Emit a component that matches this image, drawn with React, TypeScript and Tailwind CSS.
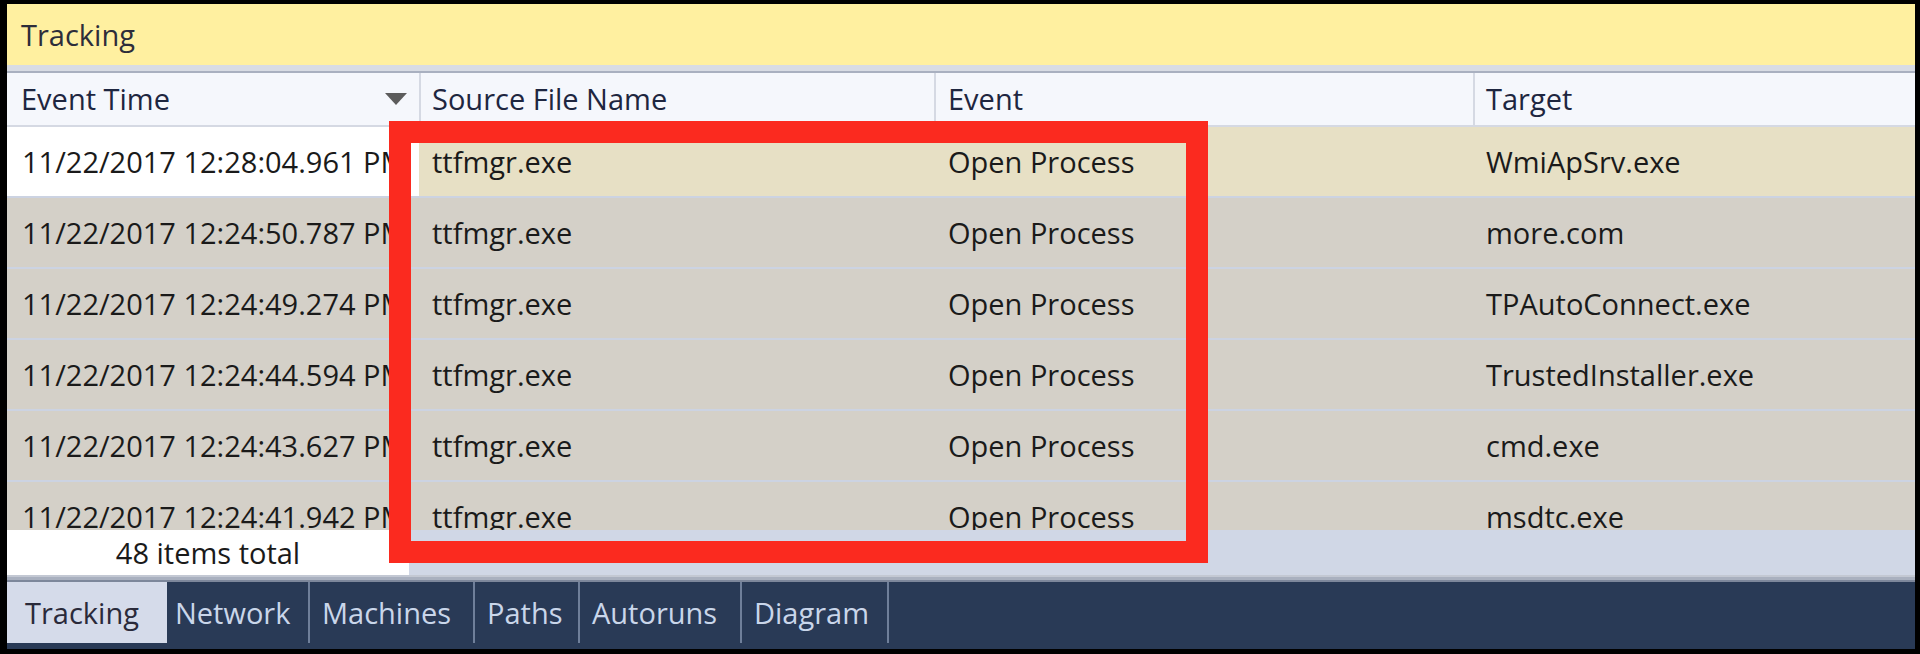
const rows = [
  { time: '11/22/2017 12:28:04.961 PM', source: 'ttfmgr.exe', event: 'Open Process', target: 'WmiApSrv.exe', selected: true },
  { time: '11/22/2017 12:24:50.787 PM', source: 'ttfmgr.exe', event: 'Open Process', target: 'more.com' },
  { time: '11/22/2017 12:24:49.274 PM', source: 'ttfmgr.exe', event: 'Open Process', target: 'TPAutoConnect.exe' },
  { time: '11/22/2017 12:24:44.594 PM', source: 'ttfmgr.exe', event: 'Open Process', target: 'TrustedInstaller.exe' },
  { time: '11/22/2017 12:24:43.627 PM', source: 'ttfmgr.exe', event: 'Open Process', target: 'cmd.exe' },
  { time: '11/22/2017 12:24:41.942 PM', source: 'ttfmgr.exe', event: 'Open Process', target: 'msdtc.exe' },
];

const tabs = [
  { label: 'Tracking', cls: 'w-[160px] pl-[18px] bg-[#d5dbea] text-[#2a2a3a] h-[61px]' },
  { label: 'Network', cls: 'w-[143px] pl-[8px] text-[#c9d6ea] border-r-2 border-[#6f7f9a]' },
  { label: 'Machines', cls: 'w-[165px] pl-[12px] text-[#c9d6ea] border-r-2 border-[#6f7f9a]' },
  { label: 'Paths', cls: 'w-[105px] pl-[12px] text-[#c9d6ea] border-r-2 border-[#6f7f9a]' },
  { label: 'Autoruns', cls: 'w-[162px] pl-[12px] text-[#c9d6ea] border-r-2 border-[#6f7f9a]' },
  { label: 'Diagram', cls: 'w-[147px] pl-[12px] text-[#c9d6ea] border-r-2 border-[#6f7f9a]' },
];

const grid = 'grid grid-cols-[412px_515px_539px_1fr]';

export default function App() {
  return (
    <div className="h-[654px] w-[1920px] bg-black pt-[4px] pl-[7px] pr-[5px] pb-[5px] font-['Open_Sans',sans-serif] text-[29px]">
      <div className="relative flex h-full flex-col overflow-hidden">
        <div className="flex h-[61px] items-center bg-[#fff0a0] pl-[14px] text-[#2d2d3a]">Tracking</div>
        <div className="h-[8px] border-b-2 border-[#a9b0c0] bg-[#d8dce4]" />

        <div className={`${grid} h-[54px] border-b-2 border-[#d5d9e3] bg-[#f5f7fc] text-[#1e2640]`}>
          <div className="flex items-center justify-between pl-[14px] pr-[12px]">
            <span>Event Time</span>
            <svg width="22" height="12" viewBox="0 0 22 12">
              <path d="M0 0h22L11 12z" fill="#5c5c5c" />
            </svg>
          </div>
          <div className="flex items-center border-l-2 border-[#d5d9e3] pl-[11px]">Source File Name</div>
          <div className="flex items-center border-l-2 border-[#d5d9e3] pl-[12px]">Event</div>
          <div className="flex items-center border-l-2 border-[#d5d9e3] pl-[11px]">Target</div>
        </div>

        <div className="h-[403px] overflow-hidden bg-[#d0d7e6] text-[#1a1a1a]">
          {rows.map((r) => (
            <div
              key={r.time}
              className={`${grid} h-[71px] border-b-2 border-[#ccd3e2] ${r.selected ? 'bg-[#e7e0c5]' : 'bg-[#d4d0c8]'}`}
            >
              <div className={`flex items-center overflow-hidden whitespace-nowrap pl-[15px] ${r.selected ? 'bg-white' : ''}`}>
                {r.time}
              </div>
              <div className="flex items-center pl-[13px]">{r.source}</div>
              <div className="flex items-center pl-[14px]">{r.event}</div>
              <div className="flex items-center pl-[13px]">{r.target}</div>
            </div>
          ))}
        </div>

        <div className="flex h-[45px] bg-[#d0d7e6]">
          <div className="flex w-[402px] items-center justify-center bg-white text-[#1a1a1a]">48 items total</div>
        </div>
        <div className="h-[7px] border-t-2 border-b-2 border-t-[#c3c8d3] border-b-[#7d879b] bg-[#a9b0bf]" />

        <div className="flex h-[67px] items-start bg-[#293a56]">
          {tabs.map((t) => (
            <div key={t.label} className={`flex h-[61px] items-center ${t.cls}`}>
              {t.label}
            </div>
          ))}
        </div>

        <div className="absolute left-[382px] top-[117px] h-[442px] w-[819px] border-[22px] border-[#fb2a1f]" />
      </div>
    </div>
  );
}
